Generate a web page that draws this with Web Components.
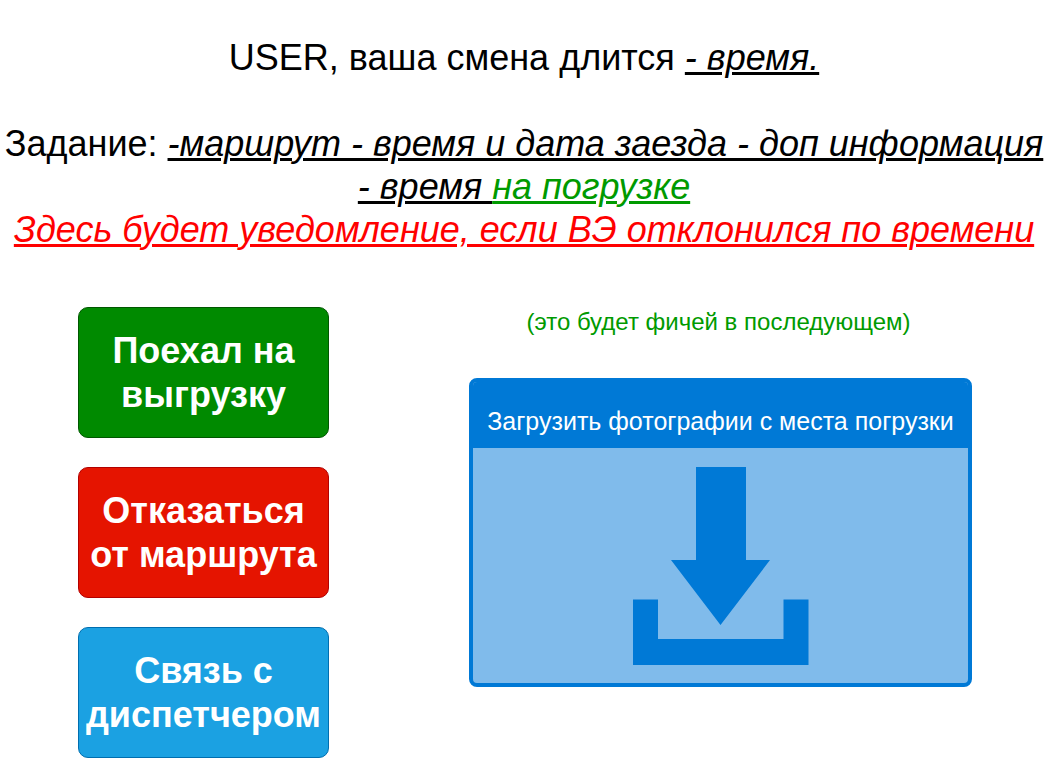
<!DOCTYPE html>
<html lang="ru">
<head>
<meta charset="utf-8">
<meta name="viewport" content="width=device-width, initial-scale=1">
<title>Смена водителя</title>
<style>
  body { margin: 0; background: #fff; color: #000; font-family: Helvetica, "Liberation Sans", Arial, sans-serif; }
</style>
</head>
<body>
<driver-page></driver-page>

<script>
  const define = (name, html) => {
    const template = document.createElement("template");
    template.innerHTML = html;
    customElements.define(name, class extends HTMLElement {
      constructor() {
        super();
        this.attachShadow({ mode: "open" }).append(template.content.cloneNode(true));
      }
    });
  };

  define("shift-status", `
    <style>
      :host { display: block; padding: 36px 0 0; text-align: center; font-size: 36px; line-height: 43px; }
      p { margin: 0; }
      p + p { margin-top: 43px; }
      ::slotted(em) { text-decoration: underline; text-decoration-thickness: 3px; }
      ::slotted(em.place) { color: #009a00; }
      ::slotted(em.alert) { color: #ff0000; display: block; }
    </style>
    <p><slot name="shift"></slot><slot name="duration"></slot></p>
    <p><slot></slot></p>
  `);

  define("action-button", `
    <style>
      :host { display: block; --fill: #1ba1e2; --edge: #006eaf; }
      :host([kind="go"]) { --fill: #008a00; --edge: #005700; }
      :host([kind="refuse"]) { --fill: #e51400; --edge: #b20000; }
      button {
        display: block; box-sizing: border-box; width: 100%; min-height: 131px; margin: 0; padding: 0 4px;
        border: 1px solid var(--edge); border-radius: 10px; background: var(--fill);
        color: #fff; font: bold 36px/44px Helvetica, "Liberation Sans", Arial, sans-serif; cursor: pointer;
      }
    </style>
    <button type="button"><slot></slot></button>
  `);

  define("download-icon", `
    <style>
      :host { display: block; }
      svg { display: block; width: 176px; height: 198px; }
    </style>
    <svg viewBox="0 0 176 198" fill="#0079d6" aria-hidden="true">
      <path d="M63 0H113V93H137L87.500 158L38 93H63Z"/>
      <path d="M0 132.500H25V172H150.500V132.500H175.500V198H0Z"/>
    </svg>
  `);

  define("photo-upload", `
    <style>
      :host { display: block; }
      button {
        display: flex; flex-direction: column; box-sizing: border-box; width: 100%; padding: 0;
        border: 4px solid #0079d6; border-radius: 8px; background: #80bbeb; overflow: hidden;
        color: #fff; font: 25px/28px Helvetica, "Liberation Sans", Arial, sans-serif; cursor: pointer;
      }
      .title { box-sizing: border-box; width: 100%; padding: 25px 0 13px; background: #0079d6; }
      .drop { display: flex; justify-content: center; width: 100%; padding: 19px 0 18px; }
    </style>
    <button type="button">
      <span class="title"><slot></slot></span>
      <span class="drop"><download-icon></download-icon></span>
    </button>
  `);

  define("driver-page", `
    <style>
      :host { display: block; }
      .board {
        display: grid; grid-template-columns: minmax(0, 251fr) minmax(0, 503fr); column-gap: 140px;
        align-items: start; padding: 56px 76px 0 78px;
      }
      .actions { display: grid; gap: 29px; }
      .note { margin: 0 4px 42px 0; text-align: center; color: #009a00; font-size: 24px; line-height: 29px; }
    </style>
    <header>
      <shift-status>
        <span slot="shift">USER, ваша смена длится </span><em slot="duration">- время.</em>
        Задание: <em>-маршрут - время и дата заезда - доп информация </em><em>- время </em><em class="place">на погрузке</em>
        <em class="alert">Здесь будет уведомление, если ВЭ отклонился по времени</em>
      </shift-status>
    </header>
    <main class="board">
      <section class="actions">
        <action-button kind="go">Поехал на выгрузку</action-button>
        <action-button kind="refuse">Отказаться от маршрута</action-button>
        <action-button kind="call">Связь с диспетчером</action-button>
      </section>
      <section>
        <p class="note">(это будет фичей в последующем)</p>
        <photo-upload>Загрузить фотографии с места погрузки</photo-upload>
      </section>
    </main>
  `);
</script>
</body>
</html>
